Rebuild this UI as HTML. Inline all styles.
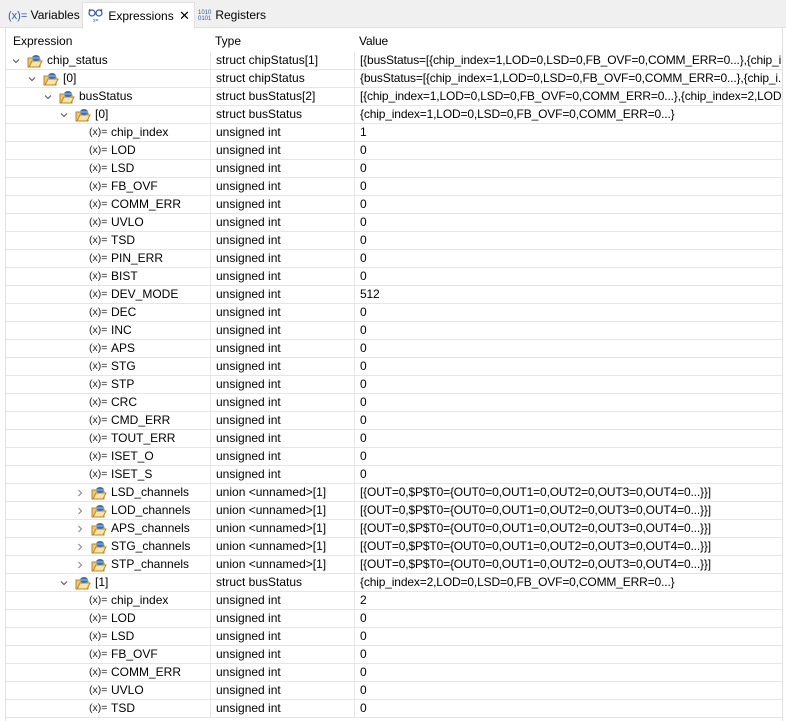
<!DOCTYPE html>
<html><head><meta charset="utf-8"><style>
*{margin:0;padding:0;box-sizing:border-box}
body{width:786px;height:721px;overflow:hidden;background:#fff;font-family:"Liberation Sans",sans-serif;font-size:12px;color:#000;position:relative}
.tabs{position:absolute;left:0;top:0;width:786px;height:28px;background:#f0f0f0;border-bottom:1px solid #e0e0e0}
.tab{position:absolute;top:3px;height:25px;line-height:25px;font-size:12px;white-space:nowrap}
.tab.act{background:#fff;border:1px solid #e0e0e0;border-bottom:none;top:2px;height:27px;width:113px}
.frame{position:absolute;left:5px;top:28px;width:778px;height:693px;border-left:1px solid #e0e0e0;border-right:1px solid #e0e0e0}
.row{position:absolute;left:6px;width:776px;height:18px;border-bottom:1px solid #e6e6e6;line-height:17px;white-space:nowrap}
.c{position:absolute;top:0;height:17px;overflow:hidden}
.c1{left:0;width:204px}
.c2{left:204px;width:144px;border-left:1px solid #e6e6e6;padding-left:5px}
.c3{left:348px;width:428px;border-left:1px solid #e6e6e6;padding-left:5px;letter-spacing:-0.15px}
.chev{position:absolute;top:5px;width:8px;height:8px}
.fold{position:absolute;top:2px;width:16px;height:14px}
svg{display:block}
.x{position:absolute;top:0;font-size:10.5px;color:#222}
.t{position:absolute;top:0}
</style></head><body>
<div class="tabs">
<div class="tab" style="left:8px"><span style="color:#2a5aa8;font-size:11px">(x)=</span> Variables</div>
<div class="tab act" style="left:82px;padding-left:4px"><svg width="18" height="14" style="display:inline-block;vertical-align:-2px" viewBox="0 0 18 14"><circle cx="5" cy="5" r="3" fill="none" stroke="#2a5aa8" stroke-width="1.2"/><circle cx="12" cy="5" r="3" fill="none" stroke="#2a5aa8" stroke-width="1.2"/><path d="M8 5h1M2 3l1-2M15 3l-1-2" stroke="#2a5aa8"/><text x="6" y="14" font-size="5" fill="#2a5aa8">x=</text></svg> Expressions <span style="font-size:13px;margin-left:2px">✕</span></div>
<div class="tab" style="left:198px"><span style="color:#2a5aa8;font-size:6px;line-height:6px;display:inline-block;vertical-align:middle;width:14px">1010<br>0101</span> Registers</div>
</div>
<div class="frame"></div>
<div class="row" style="top:32px;height:20px;border-bottom:none;line-height:18px"><div class="c c1" style="padding-left:7px">Expression</div><div class="c c2" style="border-left:none">Type</div><div class="c c3" style="border-left:none">Value</div></div>
<div id="rows"></div>
<script>
var F='<svg viewBox="0 0 16 14" width="16" height="14"><path d="M1 4h5l1 1h6v8H1z" fill="#f3c66b" stroke="#b8862e"/><path d="M2 13l3-6h10l-3 6z" fill="#fbe3a4" stroke="#b8862e"/><ellipse cx="9" cy="4" rx="4" ry="3" fill="#3d6fb0"/><path d="M5 4h8" stroke="#9cc0ea"/></svg>';
var D='<svg viewBox="0 0 8 8" width="8" height="8"><path d="M1 2.5l3 3 3-3" fill="none" stroke="#555" stroke-width="1.1"/></svg>';
var R='<svg viewBox="0 0 8 8" width="8" height="8"><path d="M2.5 1l3 3-3 3" fill="none" stroke="#888" stroke-width="1.1"/></svg>';
var rows=[
[0,'d','chip_status','struct chipStatus[1]','[{busStatus=[{chip_index=1,LOD=0,LSD=0,FB_OVF=0,COMM_ERR=0...},{chip_i...'],
[1,'d','[0]','struct chipStatus','{busStatus=[{chip_index=1,LOD=0,LSD=0,FB_OVF=0,COMM_ERR=0...},{chip_i...'],
[2,'d','busStatus','struct busStatus[2]','[{chip_index=1,LOD=0,LSD=0,FB_OVF=0,COMM_ERR=0...},{chip_index=2,LOD...'],
[3,'d','[0]','struct busStatus','{chip_index=1,LOD=0,LSD=0,FB_OVF=0,COMM_ERR=0...}']];
var L1=[['chip_index','1'],['LOD','0'],['LSD','0'],['FB_OVF','0'],['COMM_ERR','0'],['UVLO','0'],['TSD','0'],['PIN_ERR','0'],['BIST','0'],['DEV_MODE','512'],['DEC','0'],['INC','0'],['APS','0'],['STG','0'],['STP','0'],['CRC','0'],['CMD_ERR','0'],['TOUT_ERR','0'],['ISET_O','0'],['ISET_S','0']];
L1.forEach(function(a){rows.push([4,'l',a[0],'unsigned int',a[1]])});
['LSD','LOD','APS','STG','STP'].forEach(function(n){rows.push([4,'r',n+'_channels','union &lt;unnamed&gt;[1]','[{OUT=0,$P$T0={OUT0=0,OUT1=0,OUT2=0,OUT3=0,OUT4=0...}}]'])});
rows.push([3,'d','[1]','struct busStatus','{chip_index=2,LOD=0,LSD=0,FB_OVF=0,COMM_ERR=0...}']);
[['chip_index','2'],['LOD','0'],['LSD','0'],['FB_OVF','0'],['COMM_ERR','0'],['UVLO','0'],['TSD','0']].forEach(function(a){rows.push([4,'l',a[0],'unsigned int',a[1]])});
var h='';
rows.forEach(function(r,i){
 var top=52+i*18,lv=r[0],c1='';
 if(r[1]=='l'){c1='<span class="x" style="left:83px">(x)=</span><span class="t" style="left:105px">'+r[2]+'</span>';}
 else{var cx=6+lv*16,fx=21+lv*16,tx=41+lv*16;
  c1='<span class="chev" style="left:'+cx+'px">'+(r[1]=='d'?D:R)+'</span><span class="fold" style="left:'+fx+'px">'+F+'</span><span class="t" style="left:'+tx+'px">'+r[2]+'</span>';}
 h+='<div class="row" style="top:'+top+'px"><div class="c c1">'+c1+'</div><div class="c c2">'+r[3]+'</div><div class="c c3">'+r[4]+'</div></div>';
});
document.getElementById('rows').innerHTML=h;
</script>
</body></html>
